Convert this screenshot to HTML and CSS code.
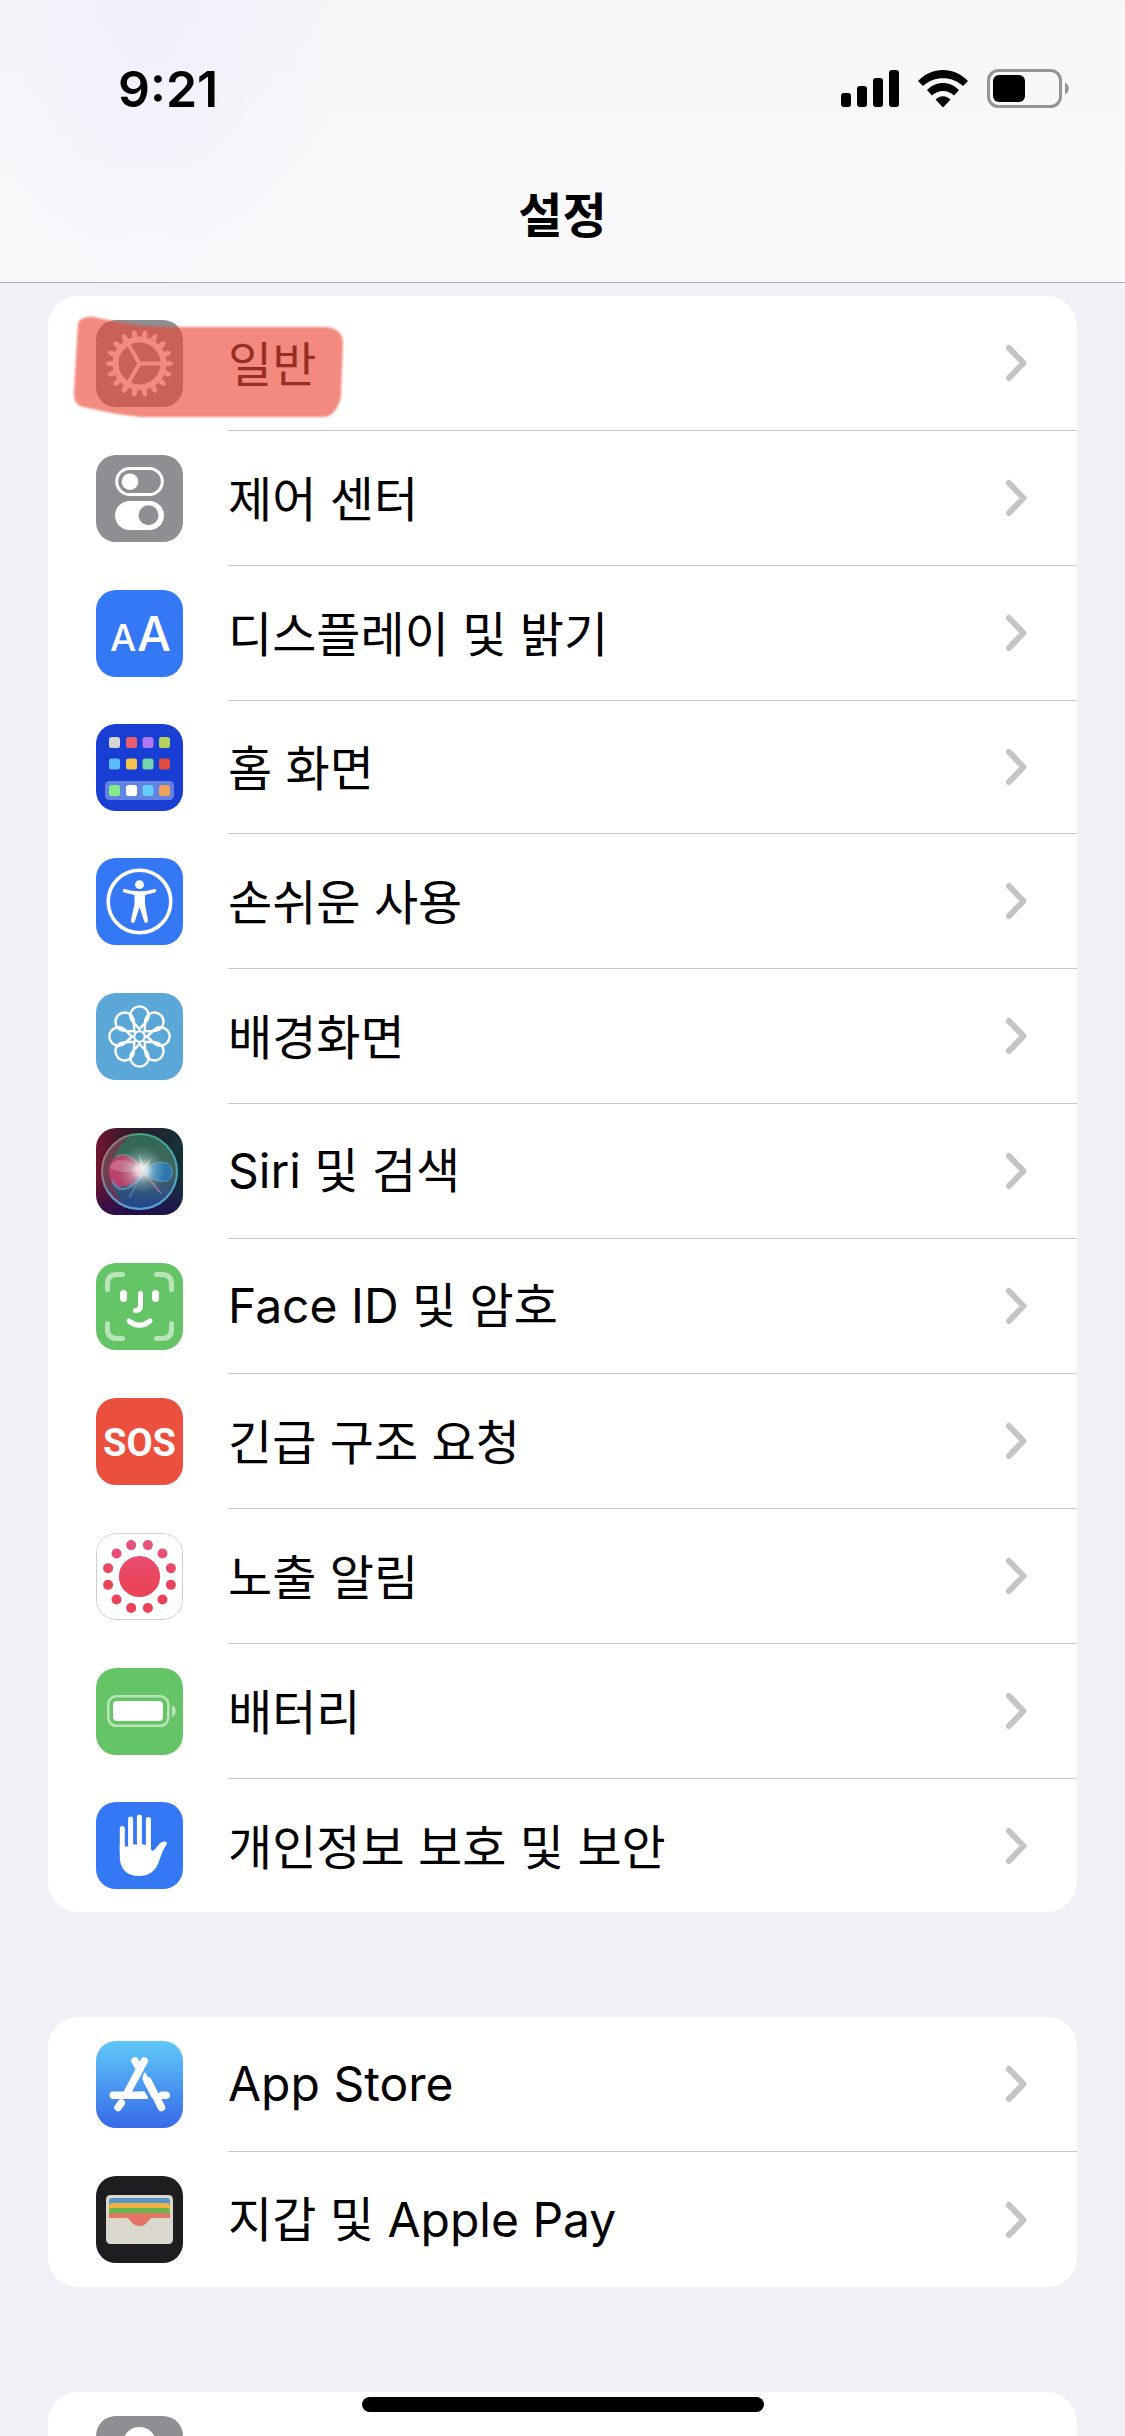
FILE: index.html
```
<!DOCTYPE html>
<html lang="ko">
<head>
    <meta charset="UTF-8">
    <meta name="viewport" content="width=device-width, initial-scale=1.0">
    <title>설정</title>
    <link rel="stylesheet" href="styles.css">
</head>
<body>
    <!-- shared shapes -->
    <svg class="defs" aria-hidden="true">
        <symbol id="chevron" viewBox="0 0 23 38">
            <path d="M4 4L18.5 19L4 34" fill="none" stroke="#c4c4c7" stroke-width="6" stroke-linecap="round" stroke-linejoin="round"/>
        </symbol>
        <symbol id="petal" viewBox="0 0 87 87">
            <path d="M43.5 36L36.500 28.500A9.200 9.200 0 1 1 50.500 28.500L43.5 36V39" fill="none" stroke="#fff" stroke-width="2.400"/>
        </symbol>
    </svg>

    <header class="header">
        <div class="status-bar">
            <time class="time">9:21</time>
            <div class="status-icons">
                <svg width="58" height="38" viewBox="0 0 58 38" aria-hidden="true">
                    <rect x="0" y="23" width="10" height="14" rx="3"/>
                    <rect x="16" y="16" width="10" height="21" rx="3"/>
                    <rect x="32" y="8" width="10" height="29" rx="3"/>
                    <rect x="48" y="0" width="10" height="37" rx="3"/>
                </svg>
                <svg width="50" height="38" viewBox="0 0 50 38" aria-hidden="true">
                    <path d="M0 11C14-3.600 36-3.600 50 11L45 16C34 5.500 16 5.500 5 16Z"/>
                    <path d="M9 20C18 10.500 32 10.500 41 20L36 25.500C30 19.500 20 19.500 14 25.500Z"/>
                    <path d="M17.500 29.500C22 25 28 25 32.500 29.500L25 37.500Z"/>
                </svg>
                <svg width="82" height="40" viewBox="0 0 82 40" aria-hidden="true">
                    <rect x="1.500" y="1.500" width="72" height="36" rx="10" fill="none" stroke="#949496" stroke-width="3"/>
                    <rect x="6" y="6" width="32" height="27" rx="6"/>
                    <path d="M78 13.500C83 16 83 23 78 25.500Z" fill="#949496"/>
                </svg>
            </div>
        </div>
        <h1 class="title">설정</h1>
    </header>

    <main class="content">
        <ul class="card">
            <li>
                <a href="#general" class="row">
                    <svg class="icon gray" viewBox="0 0 87 87" aria-hidden="true">
                        <g fill="none" stroke="#fff">
                            <circle cx="43.5" cy="43.5" r="24" stroke-width="6"/>
                            <circle cx="43.5" cy="43.5" r="28.5" stroke-width="5" pathLength="18" stroke-dasharray=".52 .48" stroke-dashoffset=".26"/>
                            <circle cx="43.5" cy="43.5" r="31.5" stroke-width="3.600" pathLength="18" stroke-dasharray=".32 .68" stroke-dashoffset=".16"/>
                            <path d="M43.5 43.5H66M43.5 43.5L32.200 24M43.5 43.5L32.200 63" stroke-width="4"/>
                        </g>
                    </svg>
                    <span class="body"><span class="label">일반</span><svg class="chevron" aria-hidden="true"><use href="#chevron"/></svg></span>
                    <svg class="marker" viewBox="0 0 274 106" aria-hidden="true">
                        <path d="M5 8C7 3 15 1 21 2C44 7 68 12 104 12H252C262 12 270 18 270 27L268 81C266 92 260 101 252 102H68C44 100 26 95 10 92C3 90 0 85 1 75Z"/>
                    </svg>
                </a>
            </li>
            <li>
                <a href="#control" class="row">
                    <svg class="icon gray" viewBox="0 0 87 87" aria-hidden="true">
                        <rect x="20.700" y="13.500" width="45.600" height="26" rx="13" fill="none" stroke="#fff" stroke-width="3"/>
                        <circle cx="34" cy="26.700" r="8.300" fill="#fff"/>
                        <rect x="19" y="46" width="49" height="29" rx="14.500" fill="#fff"/>
                        <circle cx="52.500" cy="60.300" r="10" fill="#8e8e93"/>
                    </svg>
                    <span class="body"><span class="label">제어 센터</span><svg class="chevron" aria-hidden="true"><use href="#chevron"/></svg></span>
                </a>
            </li>
            <li>
                <a href="#display" class="row">
                    <svg class="icon blue" viewBox="0 0 87 87" aria-hidden="true">
                        <text x="14" y="61" font-size="37" class="letter">A</text>
                        <text x="41" y="61" font-size="48" class="letter">A</text>
                    </svg>
                    <span class="body"><span class="label">디스플레이 및 밝기</span><svg class="chevron" aria-hidden="true"><use href="#chevron"/></svg></span>
                </a>
            </li>
            <li>
                <a href="#home" class="row compact">
                    <svg class="icon navy" viewBox="0 0 87 87" aria-hidden="true">
                        <rect x="9" y="57" width="69" height="19" rx="4.500" fill="#6482e1"/>
                        <rect x="13" y="13" width="11" height="11" rx="2.500" fill="#d5d6d2"/>
                        <rect x="30" y="13" width="11" height="11" rx="2.500" fill="#ea5b6c"/>
                        <rect x="46.500" y="13" width="11" height="11" rx="2.500" fill="#af78f2"/>
                        <rect x="63" y="13" width="11" height="11" rx="2.500" fill="#b5d35b"/>
                        <rect x="13" y="34.500" width="11" height="11" rx="2.500" fill="#5cbcf8"/>
                        <rect x="30" y="34.500" width="11" height="11" rx="2.500" fill="#f4c349"/>
                        <rect x="46.500" y="34.500" width="11" height="11" rx="2.500" fill="#72d5ae"/>
                        <rect x="63" y="34.500" width="11" height="11" rx="2.500" fill="#e14b3e"/>
                        <rect x="13" y="61" width="11" height="11" rx="2.500" fill="#86ee86"/>
                        <rect x="30" y="61" width="11" height="11" rx="2.500" fill="#fff"/>
                        <rect x="46.500" y="61" width="11" height="11" rx="2.500" fill="#62ccf8"/>
                        <rect x="63" y="61" width="11" height="11" rx="2.500" fill="#f0a158"/>
                    </svg>
                    <span class="body"><span class="label">홈 화면</span><svg class="chevron" aria-hidden="true"><use href="#chevron"/></svg></span>
                </a>
            </li>
            <li>
                <a href="#accessibility" class="row">
                    <svg class="icon blue" viewBox="0 0 87 87" aria-hidden="true">
                        <circle cx="43.5" cy="43.5" r="31.300" fill="none" stroke="#fff" stroke-width="3.600"/>
                        <circle cx="43.5" cy="26.700" r="4.400" fill="#fff"/>
                        <path d="M28.800 31C38 34 49 34 58.200 31A1.800 1.800 0 0 1 59 34.500L49 37V46L52 62A1.900 1.900 0 0 1 48.200 63.500L43.5 49L38.800 63.500A1.900 1.900 0 0 1 35 62L38.500 46V37L28 34.500A1.800 1.800 0 0 1 28.800 31Z" fill="#fff"/>
                    </svg>
                    <span class="body"><span class="label">손쉬운 사용</span><svg class="chevron" aria-hidden="true"><use href="#chevron"/></svg></span>
                </a>
            </li>
            <li>
                <a href="#wallpaper" class="row">
                    <svg class="icon sky" viewBox="0 0 87 87" aria-hidden="true">
                        <use href="#petal"/>
                        <use href="#petal" transform="rotate(45 43.5 43.5)"/>
                        <use href="#petal" transform="rotate(90 43.5 43.5)"/>
                        <use href="#petal" transform="rotate(135 43.5 43.5)"/>
                        <use href="#petal" transform="rotate(180 43.5 43.5)"/>
                        <use href="#petal" transform="rotate(225 43.5 43.5)"/>
                        <use href="#petal" transform="rotate(270 43.5 43.5)"/>
                        <use href="#petal" transform="rotate(315 43.5 43.5)"/>
                        <circle cx="43.5" cy="43.5" r="5.200" fill="none" stroke="#fff" stroke-width="2"/>
                    </svg>
                    <span class="body"><span class="label">배경화면</span><svg class="chevron" aria-hidden="true"><use href="#chevron"/></svg></span>
                </a>
            </li>
            <li>
                <a href="#siri" class="row">
                    <svg class="icon siri" viewBox="0 0 87 87" aria-hidden="true">
                        <defs>
                            <linearGradient id="orb" x1="0" y1="0" x2="0" y2="1">
                                <stop offset="0" stop-color="#2c6b55"/>
                                <stop offset=".5" stop-color="#47635f"/>
                                <stop offset="1" stop-color="#1d4590"/>
                            </linearGradient>
                            <linearGradient id="rim" x1="0" y1="0" x2="1" y2=".3">
                                <stop offset="0" stop-color="#b36a78"/>
                                <stop offset=".5" stop-color="#4aa583"/>
                                <stop offset="1" stop-color="#49a9b4"/>
                            </linearGradient>
                            <linearGradient id="rimLow" x1="0" y1="0" x2="0" y2="1">
                                <stop offset=".5" stop-color="#5a9ade" stop-opacity="0"/>
                                <stop offset="1" stop-color="#5a9ade"/>
                            </linearGradient>
                            <radialGradient id="glow">
                                <stop offset="0" stop-color="#fff"/>
                                <stop offset=".25" stop-color="#fff" stop-opacity=".85"/>
                                <stop offset=".5" stop-color="#d5f4ef" stop-opacity=".4"/>
                                <stop offset="1" stop-color="#9ed8cb" stop-opacity="0"/>
                            </radialGradient>
                        </defs>
                        <circle cx="43.5" cy="43.5" r="37.500" fill="url(#orb)"/>
                        <path d="M7 36C11 18 26 8 36 7C26 14 20 24 16 32C10 48 18 64 28 76C12 68 4 50 7 36Z" fill="#8e2843" opacity=".6"/>
                        <circle cx="43.5" cy="43.5" r="37.500" fill="none" stroke="url(#rim)" stroke-width="2"/>
                        <circle cx="43.5" cy="43.5" r="37.500" fill="none" stroke="url(#rimLow)" stroke-width="2"/>
                        <path d="M48 43C38 24 13 22 13 43C13 66 38 62 48 43Z" fill="#cf3c6c" opacity=".85"/>
                        <path d="M46 42C34 30 17 28 14 40C24 46 36 44 46 42Z" fill="#e1a0b5" opacity=".4"/>
                        <path d="M16 53C24 68 38 60 47 44" fill="none" stroke="#6a91c0" stroke-width="2" opacity=".8"/>
                        <path d="M20 29C30 22 39 32 47 42" fill="none" stroke="#c38d9f" stroke-width="1.500" opacity=".6"/>
                        <path d="M47 43C57 33 76 30 76 44C76 58 58 55 47 43Z" fill="#277cc8" opacity=".75" stroke="#57b8e7"/>
                        <path d="M48 44L66 66L62 63Z" fill="#c87fa4" stroke="#c87fa4" opacity=".7"/>
                        <path d="M46 46L33 70" stroke="#5b8ed2" stroke-width="1.500" opacity=".7"/>
                        <circle cx="46" cy="42" r="24" fill="url(#glow)" opacity=".85"/>
                        <path d="M45 42L43 26L48 38L56 29L50 41Z" fill="#fff" opacity=".4"/>
                    </svg>
                    <span class="body"><span class="label"><span class="latin">Siri</span> 및 검색</span><svg class="chevron" aria-hidden="true"><use href="#chevron"/></svg></span>
                </a>
            </li>
            <li>
                <a href="#faceid" class="row">
                    <svg class="icon green" viewBox="0 0 87 87" aria-hidden="true">
                        <g fill="none" stroke="#fff" stroke-width="5" stroke-linecap="round">
                            <path d="M11.500 26.500V21Q11.500 11.500 21 11.500H26.500M60.500 11.500H66Q75.500 11.500 75.500 21V26.500M75.500 60.500V66Q75.500 75.500 66 75.500H60.500M26.500 75.500H21Q11.500 75.500 11.500 66V60.500" opacity=".55"/>
                            <path d="M27.500 30.500V35.500M59.500 30.500V35.500" stroke-width="7"/>
                            <path d="M44.500 30.500V43Q44.500 47.500 39.500 47.500M33 58Q43.5 66.500 54 58"/>
                        </g>
                    </svg>
                    <span class="body"><span class="label"><span class="latin">Face ID</span> 및 암호</span><svg class="chevron" aria-hidden="true"><use href="#chevron"/></svg></span>
                </a>
            </li>
            <li>
                <a href="#sos" class="row">
                    <svg class="icon red" viewBox="0 0 87 87" aria-hidden="true">
                        <text x="43.5" y="58" text-anchor="middle" class="sos">SOS</text>
                    </svg>
                    <span class="body"><span class="label">긴급 구조 요청</span><svg class="chevron" aria-hidden="true"><use href="#chevron"/></svg></span>
                </a>
            </li>
            <li>
                <a href="#exposure" class="row">
                    <svg class="icon white" viewBox="0 0 87 87" aria-hidden="true">
                        <defs>
                            <linearGradient id="virus" gradientUnits="userSpaceOnUse" x1="0" y1="8" x2="0" y2="79">
                                <stop offset="0" stop-color="#e75380"/>
                                <stop offset=".6" stop-color="#ea4359"/>
                                <stop offset="1" stop-color="#ea4359"/>
                            </linearGradient>
                        </defs>
                        <rect x=".5" y=".5" width="86" height="86" rx="19.500" fill="#fff" stroke="#cdcdcf"/>
                        <circle cx="43.5" cy="43.5" r="20.600" fill="url(#virus)"/>
                        <circle cx="43.5" cy="43.5" r="32.500" fill="none" stroke="url(#virus)" stroke-width="10" stroke-linecap="round" pathLength="12" stroke-dasharray="0 1" stroke-dashoffset=".5"/>
                    </svg>
                    <span class="body"><span class="label">노출 알림</span><svg class="chevron" aria-hidden="true"><use href="#chevron"/></svg></span>
                </a>
            </li>
            <li>
                <a href="#battery" class="row">
                    <svg class="icon green" viewBox="0 0 87 87" aria-hidden="true">
                        <rect x="12.300" y="28.300" width="60" height="29.500" rx="8" fill="none" stroke="#fff" stroke-width="2.600" opacity=".55"/>
                        <rect x="17" y="33" width="50" height="20" rx="4" fill="#fff"/>
                        <path d="M76 37C81 39.500 81 46.500 76 49Z" fill="#fff" opacity=".55"/>
                    </svg>
                    <span class="body"><span class="label">배터리</span><svg class="chevron" aria-hidden="true"><use href="#chevron"/></svg></span>
                </a>
            </li>
            <li>
                <a href="#privacy" class="row compact">
                    <svg class="icon blue" viewBox="0 0 87 87" aria-hidden="true">
                        <path d="M26.300 26.500V50M34.600 17V50M43.400 15V50M52.400 17.500V50" stroke="#fff" stroke-width="5" stroke-linecap="round"/>
                        <path d="M23.800 42L28 44.500H32.500L37 42L41 43L46 42L50 43L54.900 40V47Q56 50 58.500 48C62 44 63.500 40 68.500 39.500Q72 39.500 70.500 42.500C66 49 64.500 56 62 62C58.500 70 52 74 43 74C31 74 23.800 67 23.800 55Z" fill="#fff"/>
                    </svg>
                    <span class="body"><span class="label">개인정보 보호 및 보안</span><svg class="chevron" aria-hidden="true"><use href="#chevron"/></svg></span>
                </a>
            </li>
        </ul>

        <ul class="card">
            <li>
                <a href="#appstore" class="row">
                    <svg class="icon store" viewBox="0 0 87 87" aria-hidden="true">
                        <g fill="none" stroke="#fff" stroke-width="7.500" stroke-linecap="round">
                            <path d="M48.300 20L43.5 28.500M39 20L43.5 28"/>
                            <path d="M44.500 27L31 52" stroke-linecap="butt"/>
                            <path d="M25.300 62L22 66.500"/>
                            <path d="M17.200 54.200H46M66 54.200H70.200"/>
                            <path d="M52 40L65.500 66.500"/>
                        </g>
                        <path d="M49 31Q45 35.500 47.500 41L56 57L58 46ZM44 50.450H48.500L52 56V57.950H44Z" fill="#fff"/>
                    </svg>
                    <span class="body"><span class="label"><span class="latin">App Store</span></span><svg class="chevron" aria-hidden="true"><use href="#chevron"/></svg></span>
                </a>
            </li>
            <li>
                <a href="#wallet" class="row">
                    <svg class="icon black" viewBox="0 0 87 87" aria-hidden="true">
                        <rect x="10" y="19" width="67" height="49" rx="4.500" fill="#dad7cd"/>
                        <path d="M13 42V25Q13 22 16 22H71Q74 22 74 25V42Z" fill="#5596c8"/>
                        <path d="M13 42V30Q13 27 16 27H71Q74 27 74 30V42Z" fill="#f2b13e"/>
                        <path d="M13 42V35Q13 32 16 32H71Q74 32 74 35V42Z" fill="#67b34c"/>
                        <path d="M13 42V40Q13 37 16 37H71Q74 37 74 40V42H57C52 42 52 50 43.5 50C35 50 35 42 30 42Z" fill="#e37564"/>
                    </svg>
                    <span class="body"><span class="label">지갑 및 <span class="latin">Apple Pay</span></span><svg class="chevron" aria-hidden="true"><use href="#chevron"/></svg></span>
                </a>
            </li>
        </ul>

        <ul class="card">
            <li>
                <a href="#passwords" class="row" aria-label="암호">
                    <svg class="icon gray" viewBox="0 0 87 87" aria-hidden="true">
                        <circle cx="43.5" cy="28" r="17" fill="#fff"/>
                        <path d="M37 42H50V70L43.5 77L37 70Z" fill="#fff"/>
                    </svg>
                    <span class="body"></span>
                </a>
            </li>
        </ul>
    </main>

    <div class="home-indicator"></div>
</body>
</html>
```
FILE: styles.css
```
* {
    box-sizing: border-box;
}
body {
    font-family: "Noto Sans CJK KR", "Noto Sans", sans-serif;
    background-color: #f1f0f6;
    color: #000;
    margin: 0;
    height: 100vh;
    display: flex;
    flex-direction: column;
    overflow: hidden;
}
.defs {
    display: none;
}
.header {
    flex: none;
    background: radial-gradient(ellipse 18% 110% at 13% 0, rgba(238,239,253,0.9), rgba(245,245,252,0)), linear-gradient(#f6f6f7, #fafafc);
    border-bottom: 1px solid #adadb1;
    padding: 56px 56px 32px 118px;
}
.status-bar {
    display: flex;
    align-items: center;
    justify-content: space-between;
    height: 66px;
}
.time {
    font-family: Inter, sans-serif;
    font-size: 50px;
    font-weight: 600;
}
.status-icons {
    display: flex;
    align-items: center;
    gap: 19px;
}
.title {
    font-size: 48px;
    font-weight: 700;
    line-height: 72px;
    text-align: center;
    margin: 54px 0 2px -62px;
}
.content {
    flex: 1;
    min-height: 0;
    overflow: hidden;
    padding: 13px 48px 0;
}
.card {
    list-style: none;
    margin: 0 0 105px;
    padding: 0;
    background: #fff;
    border-radius: 30px;
}
.row {
    position: relative;
    display: flex;
    align-items: center;
    gap: 45px;
    min-height: 135px;
    padding-left: 48px;
    color: inherit;
    text-decoration: none;
}
.compact {
    min-height: 133px;
}
.icon {
    flex: none;
    width: 87px;
    height: 87px;
    border-radius: 20px;
}
.body {
    flex: 1;
    align-self: stretch;
    display: flex;
    align-items: center;
    justify-content: space-between;
    border-bottom: 1px solid #c8c8ca;
    padding-right: 49px;
}
li:last-child .body {
    border-bottom: none;
}
.label {
    font-size: 48px;
    line-height: 72px;
    padding-bottom: 4px;
}
.latin {
    font-family: Inter, sans-serif;
}
.chevron {
    flex: none;
    width: 23px;
    height: 38px;
}
.gray { background: #8e8e93; }
.blue { background: #3478f6; }
.navy { background: #193ed3; }
.sky { background: #5aa7d8; }
.green { background: #65c466; }
.red { background: #eb4f3d; }
.white { background: #fff; }
.black { background: #1e1e20; }
.store { background: linear-gradient(#5fc8f8, #376ae9); }
.siri {
    background: linear-gradient(to top, rgba(30,12,90,0.7), rgba(20,20,40,0) 40%), linear-gradient(to right, #70152f, #2a1a2a 45%, #143239);
}
.letter {
    font-family: Inter, sans-serif;
    font-weight: 500;
    fill: #fff;
}
.sos {
    font-family: "Liberation Sans Narrow", Roboto, sans-serif;
    font-size: 38px;
    font-weight: 700;
    fill: #fff;
}
/* highlighter stroke over the first row */
.marker {
    position: absolute;
    left: 25px;
    top: 19px;
    width: 274px;
    height: 106px;
    fill: rgba(236,72,56,0.64);
    filter: blur(1px);
    pointer-events: none;
}
.home-indicator {
    position: fixed;
    bottom: 24px;
    left: 50%;
    width: 402px;
    height: 15px;
    margin-left: -201px;
    border-radius: 8px;
    background: #000;
}
```
